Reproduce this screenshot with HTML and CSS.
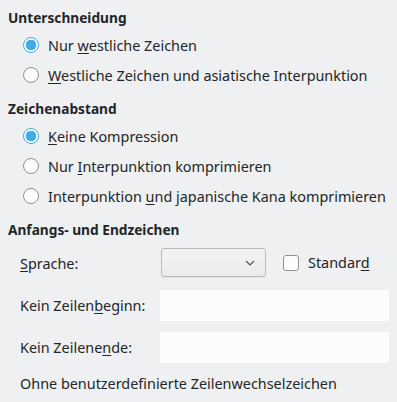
FILE: index.html
```html
<!DOCTYPE html>
<html lang="de">
<head>
    <meta charset="UTF-8">
    <title>Asiatisches Layout</title>
    <link rel="stylesheet" href="styles.css">
</head>
<body>
    <div class="panel">
        <h3 class="group-title">Unterschneidung</h3>
        <div class="options">
            <label class="radio-row"><span class="radio checked"></span><span>Nur <u>w</u>estliche Zeichen</span></label>
            <label class="radio-row"><span class="radio"></span><span><u>W</u>estliche Zeichen und asiatische Interpunktion</span></label>
        </div>

        <h3 class="group-title">Zeichenabstand</h3>
        <div class="options">
            <label class="radio-row"><span class="radio checked"></span><span><u>K</u>eine Kompression</span></label>
            <label class="radio-row"><span class="radio"></span><span>Nur <u>I</u>nterpunktion komprimieren</span></label>
            <label class="radio-row"><span class="radio"></span><span>Interpunktion <u>u</u>nd japanische Kana komprimieren</span></label>
        </div>

        <h3 class="group-title">Anfangs- und Endzeichen</h3>
        <div class="form-grid">
            <span class="form-label"><u>S</u>prache:</span>
            <div class="lang-row">
                <div class="combo">
                    <svg width="10" height="6" viewBox="0 0 10 6"><path d="M1 1 L5 5 L9 1" fill="none" stroke="#4d4f52" stroke-width="1.1"/></svg>
                </div>
                <label class="check-row"><span class="checkbox"></span><span>Standar<u>d</u></span></label>
            </div>

            <span class="form-label">Kein Zeilen<u>b</u>eginn:</span>
            <div class="text-field"></div>

            <span class="form-label">Kein Zeilene<u>n</u>de:</span>
            <div class="text-field"></div>
        </div>
        <p class="note">Ohne benutzerdefinierte Zeilenwechselzeichen</p>
    </div>
</body>
</html>
```

FILE: styles.css
```css
body {
    margin: 0;
    background-color: #eff0f1;
    font-family: "Noto Sans", sans-serif;
    font-size: 14.4px;
    color: #232629;
}

.panel {
    padding: 6px 8px 0 8px;
}

.group-title {
    font-size: 13.7px;
    font-weight: bold;
    margin: 0;
    height: 24px;
    line-height: 24px;
}

.options {
    display: flex;
    flex-direction: column;
    padding-left: 15px;
    margin-bottom: 7px;
}

.radio-row {
    display: flex;
    align-items: center;
    height: 30px;
    gap: 9px;
    white-space: nowrap;
}

u {
    text-decoration-thickness: 1px;
    text-underline-offset: 2px;
}

.radio {
    width: 14px;
    height: 14px;
    border: 1px solid #8f9194;
    border-radius: 50%;
    background: #fcfcfc;
    flex-shrink: 0;
}

.radio.checked {
    border-color: #3daee9;
    background: radial-gradient(circle, #3daee9 0, #3daee9 5px, #fcfcfc 5.5px);
}

.form-grid {
    display: grid;
    grid-template-columns: 140px 1fr;
    row-gap: 11px;
    padding-left: 12px;
    margin-top: 6px;
    align-items: center;
}

.lang-row {
    display: flex;
    align-items: center;
    gap: 17px;
    padding-bottom: 2px;
}

.combo {
    width: 105px;
    height: 29px;
    margin-left: 1px;
    border: 1px solid #b8babc;
    border-radius: 3px;
    background: linear-gradient(#f2f3f4, #eaebec);
    display: flex;
    align-items: center;
    justify-content: flex-end;
    padding-right: 10px;
    box-sizing: border-box;
    box-shadow: 0 1px 1px rgba(0, 0, 0, 0.05);
}

.check-row {
    display: flex;
    align-items: center;
    gap: 9px;
}

.checkbox {
    width: 14px;
    height: 14px;
    border: 1px solid #8f9194;
    border-radius: 3px;
    background: #fcfcfc;
}

.text-field {
    height: 31px;
    background: #fcfcfc;
}

.note {
    margin: 11px 0 0 12px;
}
```
